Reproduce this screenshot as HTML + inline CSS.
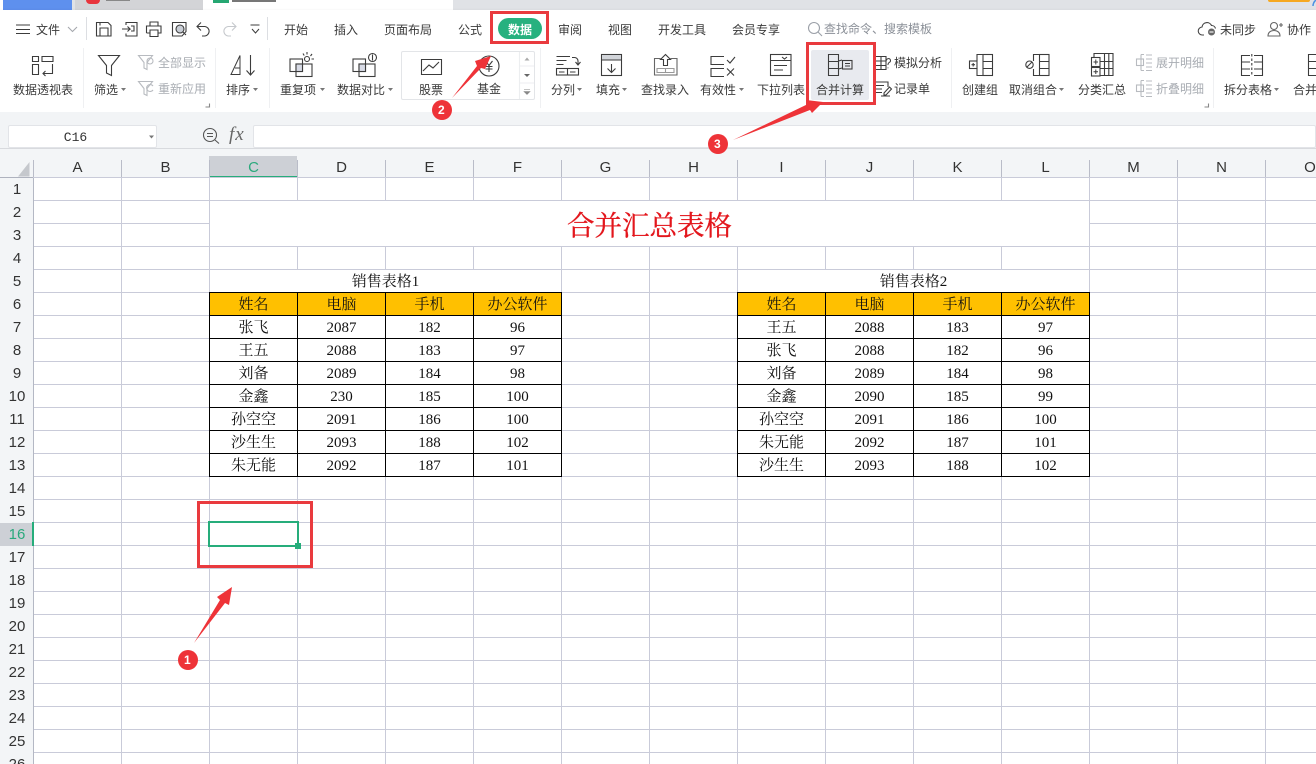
<!DOCTYPE html>
<html lang="zh-CN"><head><meta charset="utf-8"><title>合并汇总表格</title>
<style>
*{box-sizing:border-box}
html,body{margin:0;padding:0;width:1316px;height:764px;overflow:hidden;background:#fff}
body{position:relative;font-family:"Liberation Sans","Noto Sans CJK SC",sans-serif;color:#333}
.a{position:absolute}
.t{position:absolute;white-space:nowrap;font-size:12px;line-height:16px;color:#3a3a3a}
.tab{top:22px}
.l{top:82px}
.g{color:#a9adb3}
.sheet{position:absolute;left:33px;top:177px;width:1283px;height:587px;background-color:#fff;
background-image:linear-gradient(to right,transparent 87px,#c9cbd9 87px),linear-gradient(to bottom,transparent 22px,#c9cbd9 22px);
background-size:88px 100%,100% 23px;background-position:1px 0,0 1px}
.rows{position:absolute;left:0;top:178px;width:34px;height:586px;background:#f3f5f7;border-right:1px solid #b4b8c4;overflow:hidden}
.rows div{height:23px;line-height:23px;text-align:center;font-size:15px;color:#333;padding-left:1px}
.cols{position:absolute;left:0;top:149px;width:1316px;height:29px;background:#f3f5f7;border-bottom:1px solid #aeb2be}
.c{position:absolute;top:11px;width:88px;height:17px;line-height:15px;text-align:center;font-size:15px;color:#333;border-right:1px solid #b9bcc8}
table{position:absolute;border-collapse:collapse;table-layout:fixed;width:353px;font-family:"Liberation Serif","Noto Serif CJK SC",serif;font-size:15px;color:#111;background:#fff}
td,th{border:1px solid #000;width:88px;height:23px;padding:2px 0 0;text-align:center;font-weight:400;line-height:20px;overflow:hidden}
th{background:#ffc000}
.m{position:absolute;background:#fff;text-align:center;font-family:"Liberation Serif","Noto Serif CJK SC",serif;font-size:15px;color:#111}
svg{position:absolute;left:0;top:0}
</style></head><body>

<!-- top chrome -->
<div class="a" style="left:0;top:0;width:1316px;height:10px;background:#e0e2e6"></div>
<div class="a" style="left:0;top:0;width:3px;height:10px;background:#fff"></div>
<div class="a" style="left:3px;top:0;width:69px;height:10px;background:#5e90ee"></div>
<div class="a" style="left:75px;top:0;width:128px;height:10px;background:#d3d4d7"></div>
<div class="a" style="left:203px;top:0;width:250px;height:10px;background:#fff"></div>
<div class="a" style="left:213px;top:0;width:16px;height:3px;background:#26a772"></div>
<div class="a" style="left:232px;top:0;width:44px;height:2px;background:#777"></div>
<div class="a" style="left:86px;top:0;width:14px;height:4px;background:#e8343c;border-radius:0 0 7px 7px"></div>
<div class="a" style="left:106px;top:0;width:24px;height:1px;background:#888"></div>
<div class="a" style="left:1268px;top:0;width:42px;height:2px;background:#f6a821;border-radius:0 0 5px 5px"></div>
<!-- ribbon -->
<div class="a" style="left:0;top:10px;width:1316px;height:102px;background:#fff;box-shadow:0 1px 3px rgba(0,0,0,.12)"></div>
<div class="a" style="left:0;top:112px;width:1316px;height:37px;background:#f2f4f6;border-bottom:1px solid #d8dade"></div>
<div class="a" style="left:811px;top:50px;width:58px;height:50px;background:#e8eaef;border-radius:2px"></div>
<div class="a" style="left:498px;top:18px;width:44px;height:21px;background:#27b17f;border-radius:11px"></div>
<div class="a" style="left:401px;top:51px;width:134px;height:49px;border:1px solid #e3e5e8;border-radius:2px"></div>
<!-- separators -->
<div class="a" style="left:86px;top:17px;width:1px;height:23px;background:#dcdee2"></div>
<div class="a" style="left:267px;top:17px;width:1px;height:23px;background:#dcdee2"></div>
<div class="a" style="left:83px;top:48px;width:1px;height:60px;background:#eff0f2"></div>
<div class="a" style="left:215px;top:48px;width:1px;height:60px;background:#eff0f2"></div>
<div class="a" style="left:269px;top:48px;width:1px;height:60px;background:#eff0f2"></div>
<div class="a" style="left:540px;top:48px;width:1px;height:60px;background:#eff0f2"></div>
<div class="a" style="left:951px;top:48px;width:1px;height:60px;background:#eff0f2"></div>
<div class="a" style="left:1213px;top:48px;width:1px;height:60px;background:#eff0f2"></div>

<span class="t tab" style="left:36px">文件</span>
<span class="t tab" style="left:284px">开始</span>
<span class="t tab" style="left:334px">插入</span>
<span class="t tab" style="left:384px">页面布局</span>
<span class="t tab" style="left:458px">公式</span>
<span class="t tab" style="left:508px;color:#fff;font-weight:700">数据</span>
<span class="t tab" style="left:558px">审阅</span>
<span class="t tab" style="left:608px">视图</span>
<span class="t tab" style="left:658px">开发工具</span>
<span class="t tab" style="left:732px">会员专享</span>
<span class="t" style="left:824px;top:21px;color:#8b9098">查找命令、搜索模板</span>
<span class="t tab" style="left:1220px">未同步</span>
<span class="t tab" style="left:1287px">协作</span>

<span class="t l" style="left:13px">数据透视表</span>
<span class="t l" style="left:94px">筛选</span>
<span class="t g" style="left:158px;top:55px">全部显示</span>
<span class="t g" style="left:158px;top:81px">重新应用</span>
<span class="t l" style="left:226px">排序</span>
<span class="t l" style="left:280px">重复项</span>
<span class="t l" style="left:337px">数据对比</span>
<span class="t l" style="left:419px">股票</span>
<span class="t" style="left:477px;top:81px">基金</span>
<span class="t l" style="left:551px">分列</span>
<span class="t l" style="left:596px">填充</span>
<span class="t l" style="left:641px">查找录入</span>
<span class="t l" style="left:700px">有效性</span>
<span class="t l" style="left:757px">下拉列表</span>
<span class="t l" style="left:816px">合并计算</span>
<span class="t" style="left:894px;top:55px">模拟分析</span>
<span class="t" style="left:894px;top:81px">记录单</span>
<span class="t l" style="left:962px">创建组</span>
<span class="t l" style="left:1009px">取消组合</span>
<span class="t l" style="left:1078px">分类汇总</span>
<span class="t g" style="left:1156px;top:55px">展开明细</span>
<span class="t g" style="left:1156px;top:81px">折叠明细</span>
<span class="t l" style="left:1224px">拆分表格</span>
<span class="t l" style="left:1293px">合并</span>

<!-- formula bar -->
<div class="a" style="left:8px;top:125px;width:149px;height:23px;background:#fff;border:1px solid #e2e4e8;border-radius:2px;text-align:center;font:13px/24px 'Liberation Mono',monospace;color:#333;padding-right:14px">C16</div>
<div class="a" style="left:253px;top:125px;width:1063px;height:23px;background:#fff;border:1px solid #e2e4e8;border-radius:2px"></div>
<span class="t" style="left:229px;top:125px;font:italic 19px/20px 'Liberation Serif',serif;letter-spacing:1px;color:#666">fx</span>

<!-- headers -->
<div class="cols">
<div class="a" style="left:209px;top:7px;width:88px;height:21px;background:#cdd0d6"></div>
<div class="a" style="left:209px;top:27px;width:88px;height:2px;background:#26ad7b"></div>
<div class="a" style="left:33px;top:11px;width:1px;height:17px;background:#b9bcc8"></div>
<div class="c" style="left:34px">A</div><div class="c" style="left:122px">B</div><div class="c" style="left:210px;color:#2aa97c">C</div><div class="c" style="left:298px">D</div><div class="c" style="left:386px">E</div><div class="c" style="left:474px">F</div><div class="c" style="left:562px">G</div><div class="c" style="left:650px">H</div><div class="c" style="left:738px">I</div><div class="c" style="left:826px">J</div><div class="c" style="left:914px">K</div><div class="c" style="left:1002px">L</div><div class="c" style="left:1090px">M</div><div class="c" style="left:1178px">N</div><div class="c" style="left:1266px;border:0">O</div>
</div>

<div class="sheet"></div>
<div class="rows">
<div>1</div><div>2</div><div>3</div><div>4</div><div>5</div><div>6</div><div>7</div><div>8</div><div>9</div><div>10</div><div>11</div><div>12</div><div>13</div><div>14</div><div>15</div><div style="background:#cdd0d6;color:#2aa97c">16</div><div>17</div><div>18</div><div>19</div><div>20</div><div>21</div><div>22</div><div>23</div><div>24</div><div>25</div><div>26</div>
</div>
<div class="a" style="left:32px;top:522px;width:2px;height:24px;background:#26ad7b"></div>

<!-- merged cells -->
<div class="m" style="left:210px;top:201px;width:879px;height:45px;font-size:27.5px;line-height:50px;color:#e3161c;-webkit-text-stroke:.35px #e3161c">合并汇总表格</div>
<div class="m" style="left:210px;top:270px;width:351px;height:22px;line-height:24px">销售表格1</div>
<div class="m" style="left:738px;top:270px;width:351px;height:22px;line-height:24px">销售表格2</div>

<table style="left:209px;top:292px">
<tr><th>姓名</th><th>电脑</th><th>手机</th><th>办公软件</th></tr>
<tr><td>张飞</td><td>2087</td><td>182</td><td>96</td></tr>
<tr><td>王五</td><td>2088</td><td>183</td><td>97</td></tr>
<tr><td>刘备</td><td>2089</td><td>184</td><td>98</td></tr>
<tr><td>金鑫</td><td>230</td><td>185</td><td>100</td></tr>
<tr><td>孙空空</td><td>2091</td><td>186</td><td>100</td></tr>
<tr><td>沙生生</td><td>2093</td><td>188</td><td>102</td></tr>
<tr><td>朱无能</td><td>2092</td><td>187</td><td>101</td></tr>
</table>
<table style="left:737px;top:292px">
<tr><th>姓名</th><th>电脑</th><th>手机</th><th>办公软件</th></tr>
<tr><td>王五</td><td>2088</td><td>183</td><td>97</td></tr>
<tr><td>张飞</td><td>2088</td><td>182</td><td>96</td></tr>
<tr><td>刘备</td><td>2089</td><td>184</td><td>98</td></tr>
<tr><td>金鑫</td><td>2090</td><td>185</td><td>99</td></tr>
<tr><td>孙空空</td><td>2091</td><td>186</td><td>100</td></tr>
<tr><td>朱无能</td><td>2092</td><td>187</td><td>101</td></tr>
<tr><td>沙生生</td><td>2093</td><td>188</td><td>102</td></tr>
</table>

<!-- selection -->
<div class="a" style="left:208px;top:521px;width:91px;height:26px;border:2px solid #26ad7b"></div>
<div class="a" style="left:295px;top:543px;width:6px;height:6px;background:#26ad7b"></div>

<svg width="1316" height="764" viewBox="0 0 1316 764" fill="none" stroke="#3c3c3c" stroke-width="1.1">
<!-- menu -->
<path d="M16 25h14M16 29.500h14M16 33.500h14" stroke-width="1"/>
<path d="M68 27l4.500 4.500 4.500-4.500" stroke="#a5a8ad"/>
<!-- qat -->
<path d="M96.500 22.500h11.500l3 3v10.500h-14.500zM100 36v-8h8v8M100 22.500v3"/>
<path d="M126 25v-2.500h11v13.500h-11v-2.500M122 29h8l-2.500-2.500M130 29l-2.500 2.500M131 26h3v5h-3"/>
<path d="M150 26v-4h8v4M146.500 33v-7h14.500v7h-3M146.500 33h3M150 30h8v6.500h-8z"/>
<path d="M172.500 22.500h13.500v9l-4 4.500h-9.500z"/><circle cx="180" cy="29" r="4" fill="#c9ced6"/><path d="M183 32l3 3"/>
<path d="M201 22.500l-4 4 4 4M197 26.500h8a4.800 4.800 0 0 1 0 9.500h-3"/>
<path d="M232 22.500l4 4-4 4M236 26.500h-8a4.800 4.800 0 0 0 0 9.500h3" stroke="#c5c8cc"/>
<path d="M250.500 25h9M252 29l3.500 4 3.500-4" stroke-width="1"/>
<!-- search / sync -->
<circle cx="814" cy="28" r="5.500" stroke="#9ba0a8"/><path d="M818 32l4 4" stroke="#9ba0a8"/>
<path d="M1204 35h-1.500a4 4 0 0 1-.5-8 5 5 0 0 1 9.500-1.500 4 4 0 0 1 4 3" stroke="#444"/><circle cx="1211.500" cy="32" r="3.500" fill="#666" stroke="none"/><path d="M1209.500 32h4" stroke="#fff"/>
<circle cx="1274" cy="26" r="3.500" stroke="#666"/><path d="M1268 36c0-3.500 2.500-5.500 6-5.500s6 2 6 5.500zM1279 25h4M1281 23v4" stroke="#666"/>
<path d="M1316 0a8 8 0 0 0-3 6" stroke="#4a90e2" stroke-width="1.500"/>
<!-- pivot -->
<path d="M32.500 56.500h6v5h-6zM32.500 64.500h6v10h-6zM42 56.500h11v5h-11zM52.500 64v9.500h-9M45.500 71l-2.500 2.500 2.500 2.500"/>
<!-- filter -->
<path d="M98.500 55.500h21l-8 10v10l-5-2.500v-7.500z"/>
<g stroke="#b8bbc0"><path d="M138.500 55.500h14l-5.500 7v7l-3-1.500v-5.500z"/><circle cx="150" cy="61" r="3"/><path d="M138.500 81.500h14l-5.500 7v7l-3-1.500v-5.500z"/><path d="M153 86a3.500 3.500 0 1 0 0 4"/></g>
<path d="M209.500 103.500v3.500h-4M1208.500 103.500v3.500h-4" stroke="#888"/>
<!-- sort -->
<path d="M231 74.500l9-19v19zM235 68h5" stroke-width="1"/><path d="M250.500 55v19.500M246.500 70.500l4 4.500 4-4.500"/>
<!-- duplicate -->
<rect x="296" y="64" width="16" height="12.500"/><rect x="290" y="59" width="12.500" height="12.500"/><rect x="296" y="64" width="6.500" height="7.500" fill="#d8dbe6"/>
<circle cx="307" cy="59" r="2.500"/><path d="M307 52v2.500M312 54l-1.500 2M314 59h-2.500M303 53.500l1.200 2"/>
<!-- compare -->
<rect x="359" y="64" width="16" height="12.500"/><rect x="353" y="59" width="12.500" height="12.500"/><rect x="359" y="64" width="6.500" height="7.500" fill="#d8dbe6"/>
<circle cx="372.500" cy="57.500" r="4"/><path d="M372.500 54.500v6"/>
<!-- stock / fund -->
<path d="M421.500 59.500h20v15h-20zM423 71l6-6 4 3 6-6"/>
<circle cx="489" cy="66" r="10"/><path d="M485.500 61l3.500 4.500 3.500-4.500M489 65.500v6.500M485.500 66.500h7M485.500 69h7"/>
<path d="M519.500 52v47" stroke="#eceef0"/><path d="M520 66h14M520 83h14" stroke="#eceef0"/>
<path d="M524.500 60.500l2.500-3 2.500 3z" fill="#aaa" stroke="none"/><path d="M524 74l3 3 3-3z" fill="#666" stroke="none"/><path d="M524 89.500h6M524 91.500l3 3 3-3z" fill="#888" stroke="#888" stroke-width=".6"/>
<!-- split -->
<path d="M556.500 56.500h13.500M556.500 60.500h10M556.500 64.500h7"/><path d="M572 57.500h2.500a3.500 3.500 0 0 1 3.500 3.500v3.500M575.500 62l2.500 3 2.500-3"/>
<rect x="556.500" y="68.500" width="22" height="6.500"/><path d="M567.500 68.500v6.500M559 72h5.500M570 72h5.500"/>
<!-- fill -->
<rect x="601.500" y="54.500" width="20" height="21"/><rect x="602" y="55" width="19" height="5" fill="#d2d5da" stroke="none"/><path d="M601.500 60h20M611.500 64v8M607.500 68.500l4 4 4-4"/>
<!-- lookup -->
<path d="M660.500 58.500h-6v16.500h22.500v-16.500h-6.500" stroke="#666"/><path d="M665.500 54.500l-5 5h3v6h4v-6h3z"/><path d="M657 68.500h17v4h-17zM665.500 68.500v4" stroke="#999"/>
<!-- validity -->
<path d="M724 56.500h-13v8h13M724 68.500h-13v8h13M727 60l3 3 5-6M727 68.500l7 7M734 68.500l-7 7"/>
<!-- dropdown list -->
<rect x="770.500" y="54.500" width="20.500" height="21"/><path d="M770.500 60.500h20.500M782 57l2.500 2 2.500-2M774 65.500h13M774 70h9"/>
<!-- consolidate -->
<path d="M828.500 54.500h10v21h-10zM828.500 61.500h10M828.500 68.500h10M838.500 61l3.500-1M838.500 69l3.500-1"/><rect x="842.500" y="60.500" width="9.500" height="8.500"/><path d="M845 63.500h5M845 66h5"/>
<!-- what-if, record -->
<path d="M876 56.500h10v13h-10M876 61h10M876 65.500h10M881 56.500v13"/><path d="M886.500 60.500a2 2 0 1 1 2.500 2l-1 1.500v1M888 67.500v.8" stroke-width="1"/>
<path d="M876 82h12v5M876 85.500h8M876 89h6M876 92.500h6M881 96h9M884 93l5.500-6 2 2-5.500 6h-2z"/>
<!-- group -->
<rect x="983" y="54.500" width="9.500" height="21"/><path d="M983 61.500h9.500M983 68.500h9.500M983 54.500h-6v6.500M977 68v7.500h6"/><rect x="969.500" y="61" width="7.500" height="7.500"/><path d="M971.500 64.700h3.500M973.200 63v3.500"/>
<!-- ungroup -->
<rect x="1039.500" y="54.500" width="9.500" height="21"/><path d="M1039.500 61.500h9.500M1039.500 68.500h9.500M1039.500 54.500h-6v6.500M1033.500 69v6.500h6"/><circle cx="1029.500" cy="64.700" r="3.700"/><path d="M1027 67l5-5"/>
<!-- subtotal -->
<path d="M1094 57v-3.500h19v22h-13M1104.500 53.500v22M1108.800 53.500v22M1100 61.500h13M1100 68.500h13"/><rect x="1091.500" y="57.500" width="8.500" height="9"/><rect x="1091.500" y="67.500" width="8.500" height="8.500"/><path d="M1093.500 62h4.500M1095.800 59.500v5M1093.500 71.700h4.500M1095.800 69.500v4.500" stroke-width="1"/>
<!-- expand/fold -->
<g stroke="#b8bbc0"><path d="M1141 54.500v16M1141 54.500h3M1141 70.500h3M1146 55h6M1146 59h6M1146 63h6M1146 67h6M1146 70.500h6"/><rect x="1136.500" y="59" width="7" height="6.500"/><path d="M1141 80.500v16M1141 80.500h3M1141 96.500h3M1146 81h6M1146 85h6M1146 89h6M1146 93h6M1146 96.500h6"/><rect x="1136.500" y="85" width="7" height="6.500"/></g>
<!-- split table -->
<path d="M1250 55.500h-8.500v20h8.500M1254 55.500h8.500v20h-8.500M1241.500 62h8.500M1241.500 69h8.500M1254 62h8.500M1254 69h8.500"/><path d="M1251.800 54v22" stroke-dasharray="2.500 2"/>
<!-- merge cut -->
<path d="M1316 54.500h-7.500v21h7.500M1308.500 61.500h7.500M1308.500 68.500h7.500"/>
<!-- magnifier -->
<circle cx="210" cy="135" r="6.500" stroke="#555"/><path d="M207 133.500h6M207 136.500h6M215 140l4 3.500" stroke="#555"/>
<!-- small caret triangles -->
<g fill="#777" stroke="none">
<path d="M149 135.500h5l-2.500 3zM121 88h5l-2.500 3zM253 88h5l-2.500 3zM320 88h5l-2.500 3zM388 88h5l-2.500 3zM577 88h5l-2.500 3zM622 88h5l-2.500 3zM739 88h5l-2.500 3zM1059 88h5l-2.500 3zM1274 88h5l-2.500 3z"/>
</g>
<path d="M29.500 162v14.500h-11.500z" fill="#c5c8cd" stroke="none"/>
<!-- red annotations -->
<g stroke="#e93a3e" stroke-width="3" fill="none">
<rect x="198.500" y="502.500" width="113" height="64"/>
<rect x="491.500" y="12.500" width="56" height="30"/>
<rect x="807.500" y="43.500" width="67" height="60"/>
</g>
<g fill="#ee3338" stroke="none">
<polygon points="194,643 220,600 217,597 232,587 229,605 225,603"/>
<polygon points="452,98 477,66 475,61 491,56 485,69 481,68"/>
<polygon points="733,140 808,104 806,100 823,102 812,113 810,110"/>
<circle cx="188" cy="660" r="10"/><circle cx="442" cy="110" r="10"/><circle cx="718" cy="144" r="10"/>
</g>
</svg>
<span class="t" style="left:184px;top:652px;color:#fff;font-weight:700">1</span>
<span class="t" style="left:438px;top:102px;color:#fff;font-weight:700">2</span>
<span class="t" style="left:714px;top:136px;color:#fff;font-weight:700">3</span>
</body></html>
